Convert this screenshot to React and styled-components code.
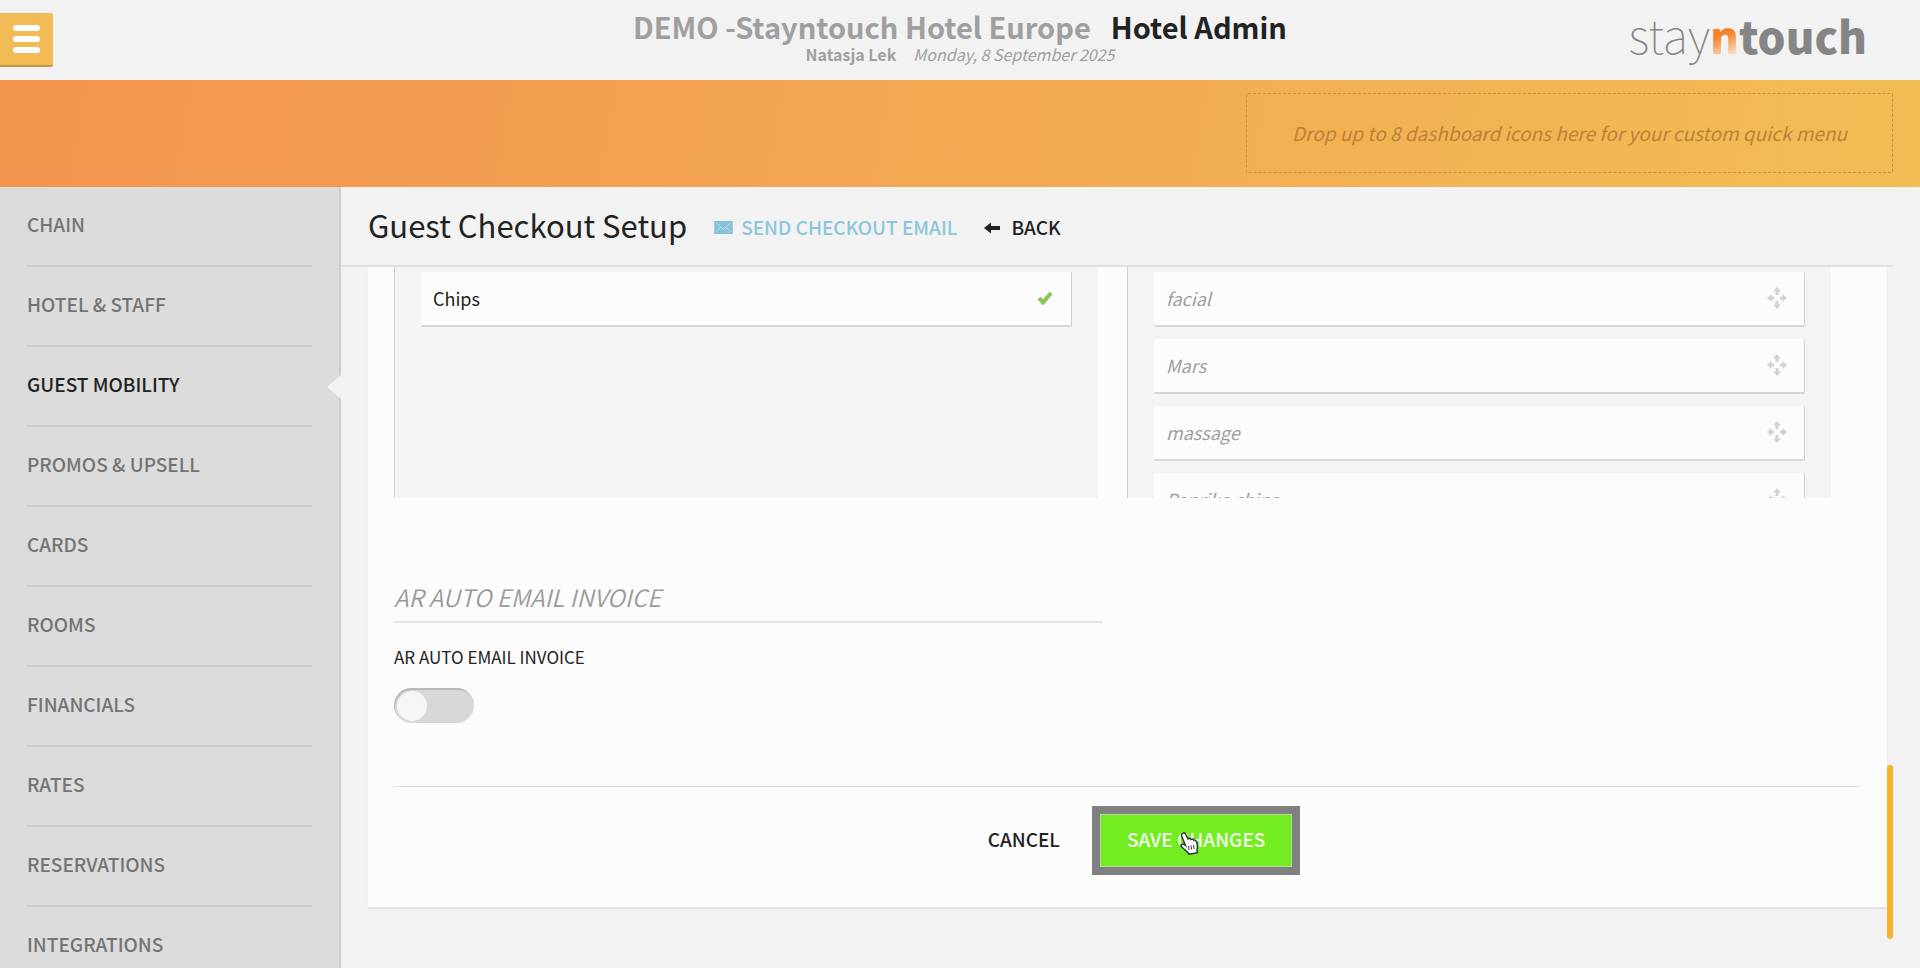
import React from "react";
import styled, { createGlobalStyle } from "styled-components";

const GlobalStyle = createGlobalStyle`
  * {
    box-sizing: border-box;
  }

  body {
    margin: 0;
    background: #f2f2f2;
    color: #222222;
    font-family: "Noto Sans CJK JP", "Open Sans", sans-serif;
    font-size: 16px;
    line-height: 24px;
  }

  button {
    padding: 0;
    border: 0;
    background: none;
    color: inherit;
    font: inherit;
    cursor: pointer;
  }

  a {
    color: inherit;
    text-decoration: none;
  }
`;

const Page = styled.div`
  display: flex;
  flex-direction: column;
  height: 100vh;
  overflow: hidden;
`;

const Header = styled.header`
  display: grid;
  grid-template-columns: 1fr auto 1fr;
  flex: none;
  height: 80px;
`;

const MenuButton = styled.button`
  display: flex;
  flex-direction: column;
  align-items: center;
  justify-content: center;
  gap: 5px;
  width: 53px;
  height: 54px;
  margin-top: 13px;
  background: #f2bb55;
  border-bottom: 2px solid #c0974a;
  border-radius: 0 2px 2px 0;
`;

const MenuBar = styled.span`
  width: 27px;
  height: 6px;
  background: #ffffff;
  border-radius: 3px;
`;

const HeaderTitle = styled.div`
  padding-top: 9px;
  text-align: center;
`;

const HotelName = styled.h1`
  display: flex;
  gap: 20px;
  margin: 0;
  font-size: 29px;
  font-weight: 700;
  line-height: 34px;
  color: #9f9f9f;
`;

const AdminName = styled.span`
  color: #222222;
`;

const UserLine = styled.p`
  display: flex;
  justify-content: center;
  gap: 17px;
  margin: 0;
  font-size: 16px;
  line-height: 22px;
  color: #9f9f9f;
`;

const Logo = styled.a`
  justify-self: end;
  padding: 6px 53px 0 0;
  font-size: 47px;
  font-weight: 100;
  line-height: 56px;
  color: #858585;
`;

const LogoBold = styled.span`
  font-size: 44px;
  font-weight: 900;
`;

const LogoAccent = styled(LogoBold)`
  background: linear-gradient(160deg, #f5832a 50%, #fbd9bd 78%);
  background-clip: text;
  color: transparent;
`;

const QuickMenu = styled.div`
  display: flex;
  justify-content: flex-end;
  flex: none;
  height: 107px;
  padding: 13px 27px 14px;
  background: linear-gradient(100deg, #f3944f, #f2bd55);
`;

const DropZone = styled.div`
  display: flex;
  align-items: center;
  padding: 0 45px;
  border: 1px dashed #c58f42;
  border-radius: 2px;
  font-size: 19px;
  font-style: italic;
  color: #bb8238;
`;

const Body = styled.div`
  display: flex;
  flex: 1;
  min-height: 0;
`;

const Sidebar = styled.nav`
  flex: none;
  width: 341px;
  padding: 0 27px;
  background: #dcdcdc;
  border-right: 2px solid #cecece;
`;

const NavItem = styled.a`
  position: relative;
  display: block;
  height: 80px;
  border-bottom: 2px solid #cccccc;
  font-size: 19px;
  font-weight: 500;
  line-height: 74px;
  color: ${props => (props.$active ? "#222222" : "#747474")};

  &::after {
    content: "";
    display: ${props => (props.$active ? "block" : "none")};
    position: absolute;
    top: 28px;
    right: -29px;
    border: 12px solid transparent;
    border-left-width: 0;
    border-right: 14px solid #f2f2f2;
  }
`;

const Main = styled.main`
  display: flex;
  flex-direction: column;
  flex: 1;
  min-width: 0;
  margin-right: 27px;
`;

const TitleBar = styled.div`
  display: flex;
  align-items: center;
  gap: 27px;
  flex: none;
  height: 80px;
  padding: 0 0 3px 27px;
  border-bottom: 2px solid #dfdfdf;
`;

const PageTitle = styled.h2`
  margin: 0;
  font-size: 31px;
  font-weight: 400;
  line-height: 40px;
`;

const TitleLink = styled.a`
  display: flex;
  align-items: center;
  gap: 8px;
  padding-top: 4px;
  font-size: 19px;
  font-weight: 500;
  color: ${props => props.$color || "#222222"};

  svg {
    margin-top: 2px;
  }
`;

const ScrollArea = styled.div`
  position: relative;
  flex: 1;
  min-height: 0;
  padding: 0 6px 0 27px;
  overflow: hidden;
`;

const ScrollThumb = styled.div`
  position: absolute;
  right: 0;
  bottom: 29px;
  width: 6px;
  height: 174px;
  background: #f5b528;
  border-radius: 3px;
`;

const Card = styled.form`
  padding: 0 27px 32px 26px;
  background: #fcfcfc;
  box-shadow: 0 2px 1px #e2e2e2;
`;

const Columns = styled.div`
  display: grid;
  grid-template-columns: 1fr 1fr;
  gap: 29px;
  padding-right: 29px;
`;

const ListPanel = styled.ul`
  height: 231px;
  margin: 0;
  padding: 5px 26px 0;
  overflow: hidden;
  list-style: none;
  background: #f4f4f4;
  border-left: 1px solid #cfcfcf;
`;

const ListItem = styled.li`
  display: flex;
  align-items: center;
  justify-content: space-between;
  height: 55px;
  margin-bottom: 12px;
  padding: 0 17px 1px 12px;
  background: #fcfcfc;
  border-right: 1px solid #d0d0d0;
  border-bottom: 2px solid #d6d6d6;
  border-radius: 2px;
  font-size: 18px;
  font-style: ${props => (props.$available ? "italic" : "normal")};
  color: ${props => (props.$available ? "#9f9f9f" : "#222222")};
`;

const Section = styled.section`
  width: 50%;
  padding: 81px 24px 0 0;
`;

const SectionTitle = styled.h3`
  margin: 0 0 22px;
  padding-bottom: 6px;
  border-bottom: 2px solid #e4e4e4;
  font-size: 24px;
  font-style: italic;
  font-weight: 350;
  line-height: 36px;
  color: #9a9a9a;
`;

const ToggleLabel = styled.label`
  display: flex;
  flex-direction: column;
  gap: 19px;
  font-size: 17px;
`;

const Toggle = styled.input`
  appearance: none;
  width: 80px;
  height: 35px;
  margin: 0;
  padding: 3px;
  background: #d8d8d8;
  border: 0;
  border-radius: 18px;
  box-shadow: inset 1px 2px 1px #b8b8b8;

  &::before {
    content: "";
    display: block;
    width: 30px;
    height: 30px;
    background: #f6f6f6;
    border-radius: 50%;
  }

  &:checked::before {
    margin-left: auto;
  }
`;

const Actions = styled.div`
  display: flex;
  align-items: center;
  justify-content: center;
  gap: 32px;
  margin-top: 63px;
  padding: 19px 0 0 34px;
  border-top: 1px solid #e0e0e0;
`;

const CancelButton = styled.button`
  padding-bottom: 3px;
  font-size: 19px;
  font-weight: 500;
`;

const SaveButton = styled.button`
  position: relative;
  height: 69px;
  padding: 0 27px 3px;
  background: #74ec22;
  border: 8px solid #808080;
  box-shadow: inset 1px 1px 0 #b5dca0, inset -1px -1px 0 #b5dca0;
  font-size: 19px;
  font-weight: 500;
  color: #f4fff0;
`;

const Pointer = styled.svg`
  position: absolute;
  top: 18px;
  left: 79px;
`;

const menuItems = [
  "CHAIN",
  "HOTEL & STAFF",
  "GUEST MOBILITY",
  "PROMOS & UPSELL",
  "CARDS",
  "ROOMS",
  "FINANCIALS",
  "RATES",
  "RESERVATIONS",
  "INTEGRATIONS"
];

const availableItems = ["facial", "Mars", "massage", "Paprika chips"];

const MailIcon = () => (
  <svg width="19" height="13" viewBox="0 0 20 14">
    <path d="M0 0h20v14H0z" fill="#84c2d8" />
    <path
      d="M2 2l8 7 8-7M2 12l5-5M18 12l-5-5"
      fill="none"
      stroke="#c4e1eb"
      strokeWidth="1"
    />
  </svg>
);

const BackIcon = () => (
  <svg width="19" height="12" viewBox="0 0 19 12">
    <path d="M0 6l7-5.5V4h9v4H7v3.5z" fill="#222222" />
  </svg>
);

const CheckIcon = () => (
  <svg width="17" height="14" viewBox="0 0 17 14">
    <path d="M2 7l4 4.5L14 2" fill="none" stroke="#84c754" strokeWidth="4" />
  </svg>
);

const MoveIcon = () => (
  <svg width="20" height="22" viewBox="0 0 20 22" fill="#d2d2d2">
    <path d="M10 0l4 4.5h-2.500V8h-3V4.500H6zM10 22l4-4.500h-2.500V14h-3v3.500H6z" />
    <path d="M0 11l4.500-4v2.500H7v3H4.500V15zM20 11l-4.500-4v2.500H13v3h2.500V15z" />
  </svg>
);

const App = () => {
  return (
    <Page>
      <GlobalStyle />
      <Header>
        <MenuButton type="button" aria-label="Menu">
          <MenuBar />
          <MenuBar />
          <MenuBar />
        </MenuButton>
        <HeaderTitle>
          <HotelName>
            DEMO -Stayntouch Hotel Europe <AdminName>Hotel Admin</AdminName>
          </HotelName>
          <UserLine>
            <b>Natasja Lek</b>
            <i>Monday, 8 September 2025</i>
          </UserLine>
        </HeaderTitle>
        <Logo href="#">
          stay<LogoAccent>n</LogoAccent>
          <LogoBold>touch</LogoBold>
        </Logo>
      </Header>

      <QuickMenu>
        <DropZone>
          Drop up to 8 dashboard icons here for your custom quick menu
        </DropZone>
      </QuickMenu>

      <Body>
        <Sidebar>
          {menuItems.map(item => (
            <NavItem key={item} href="#" $active={item === "GUEST MOBILITY"}>
              {item}
            </NavItem>
          ))}
        </Sidebar>

        <Main>
          <TitleBar>
            <PageTitle>Guest Checkout Setup</PageTitle>
            <TitleLink href="#" $color="#8cc6da">
              <MailIcon />
              SEND CHECKOUT EMAIL
            </TitleLink>
            <TitleLink href="#">
              <BackIcon />
              BACK
            </TitleLink>
          </TitleBar>

          <ScrollArea>
            <Card>
              <Columns>
                <ListPanel>
                  <ListItem>
                    Chips
                    <CheckIcon />
                  </ListItem>
                </ListPanel>
                <ListPanel>
                  {availableItems.map(item => (
                    <ListItem key={item} $available>
                      {item}
                      <MoveIcon />
                    </ListItem>
                  ))}
                </ListPanel>
              </Columns>

              <Section>
                <SectionTitle>AR AUTO EMAIL INVOICE</SectionTitle>
                <ToggleLabel>
                  AR AUTO EMAIL INVOICE
                  <Toggle type="checkbox" />
                </ToggleLabel>
              </Section>

              <Actions>
                <CancelButton type="button">CANCEL</CancelButton>
                <SaveButton type="button">
                  SAVE CHANGES
                  {/* hand cursor */}
                  <Pointer width="20" height="23" viewBox="0 0 20 23">
                    <path
                      d="M3.500 1.500c1.200-.9 2.700-.5 3.200.8L9 7c1-1 2.500-.8 3 .5 1-.9 2.400-.5 2.800.7 1.300-.4 2.300.3 2.700 1.500 1 3 1.500 5 .5 8l.5 3-8.500 1.500c-1-2.500-3.500-3.700-6-6C2 14.500 1.500 13 2.500 12.300c1-.6 2.500 0 4 1.200L3 5c-.7-1.500-.5-2.800.5-3.500z"
                      fill="#ffffff"
                      stroke="#333333"
                      strokeWidth="1.5"
                    />
                    <path
                      d="M9.500 14l.6 4M12 13.500l.6 4M14.500 13l.6 4"
                      stroke="#333333"
                      strokeWidth="1"
                    />
                  </Pointer>
                </SaveButton>
              </Actions>
            </Card>
            <ScrollThumb />
          </ScrollArea>
        </Main>
      </Body>
    </Page>
  );
};

export default App;
